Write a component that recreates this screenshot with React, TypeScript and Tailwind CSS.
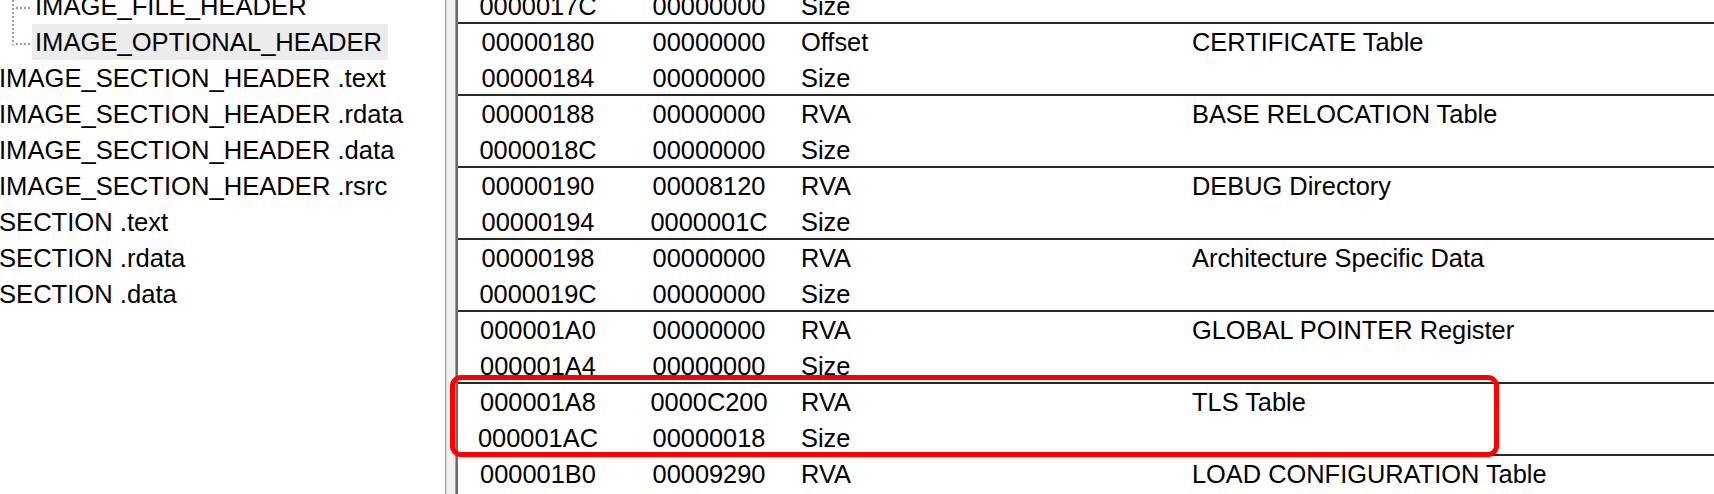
import React from "react";

type Row = [string, string, string, string];

const pairs: Row[][] = [
  [
    ["00000178", "00000000", "RVA", "EXCEPTION Table"],
    ["0000017C", "00000000", "Size", ""],
  ],
  [
    ["00000180", "00000000", "Offset", "CERTIFICATE Table"],
    ["00000184", "00000000", "Size", ""],
  ],
  [
    ["00000188", "00000000", "RVA", "BASE RELOCATION Table"],
    ["0000018C", "00000000", "Size", ""],
  ],
  [
    ["00000190", "00008120", "RVA", "DEBUG Directory"],
    ["00000194", "0000001C", "Size", ""],
  ],
  [
    ["00000198", "00000000", "RVA", "Architecture Specific Data"],
    ["0000019C", "00000000", "Size", ""],
  ],
  [
    ["000001A0", "00000000", "RVA", "GLOBAL POINTER Register"],
    ["000001A4", "00000000", "Size", ""],
  ],
  [
    ["000001A8", "0000C200", "RVA", "TLS Table"],
    ["000001AC", "00000018", "Size", ""],
  ],
  [
    ["000001B0", "00009290", "RVA", "LOAD CONFIGURATION Table"],
    ["000001B4", "00000040", "Size", ""],
  ],
];

function Connector({ last }: { last: boolean }) {
  return (
    <svg width="32" height="36" className="flex-none">
      <line
        x1="13"
        y1="0"
        x2="13"
        y2={last ? 21 : 36}
        stroke="#9c9c9c"
        strokeWidth="2"
        strokeDasharray="2 2"
      />
      <line
        x1="16"
        y1="20"
        x2="31"
        y2="20"
        stroke="#9c9c9c"
        strokeWidth="2"
        strokeDasharray="2 2"
      />
    </svg>
  );
}

function ListRow({ r, bottomLine }: { r: Row; bottomLine: boolean }) {
  return (
    <div
      className={
        "flex h-[36px] leading-[36px] whitespace-nowrap " +
        (bottomLine ? "shadow-[inset_0_-2px_0_#2a2a2a]" : "")
      }
    >
      <div className="w-[160px] flex-none text-center">{r[0]}</div>
      <div className="w-[182px] flex-none text-center">{r[1]}</div>
      <div className="w-[392px] flex-none pl-[1px]">{r[2]}</div>
      <div className="flex-1">{r[3]}</div>
    </div>
  );
}

export default function App() {
  const topItems = [
    "IMAGE_SECTION_HEADER .text",
    "IMAGE_SECTION_HEADER .rdata",
    "IMAGE_SECTION_HEADER .data",
    "IMAGE_SECTION_HEADER .rsrc",
    "SECTION .text",
    "SECTION .rdata",
    "SECTION .data",
  ];
  return (
    <div className="relative flex w-[1714px] h-[494px] overflow-hidden bg-white text-black font-['Liberation_Sans',Arial,sans-serif]">
      {/* Tree panel */}
      <div className="w-[445px] flex-none overflow-hidden text-[25.6px] leading-[36px]">
        <div className="-mt-[12px]">
          <div className="flex h-[36px] items-center whitespace-nowrap">
            <Connector last={false} />
            <span className="pl-[3px]">IMAGE_FILE_HEADER</span>
          </div>
          <div className="flex h-[36px] items-center whitespace-nowrap">
            <Connector last={true} />
            <span className="w-[356px] h-[36px] bg-[#ececec] pl-[3px]">IMAGE_OPTIONAL_HEADER</span>
          </div>
          {topItems.map((t) => (
            <div key={t} className="h-[36px] whitespace-nowrap -ml-[1px]">
              {t}
            </div>
          ))}
        </div>
      </div>

      {/* Splitter */}
      <div className="flex flex-none h-full">
        <div className="w-[1px] bg-[#a0a0a0]" />
        <div className="w-[1px] bg-[#dcdcdc]" />
        <div className="w-[8px] bg-[#f0f0f0]" />
        <div className="w-[1px] bg-[#a0a0a0]" />
        <div className="w-[2px] bg-[#6a6a6a]" />
      </div>

      {/* List panel */}
      <div className="flex-1 overflow-hidden text-[25.4px]">
        <div className="-mt-[48px]">
          {pairs.map((p, i) => (
            <div key={i}>
              <ListRow r={p[0]} bottomLine={false} />
              <ListRow r={p[1]} bottomLine={true} />
            </div>
          ))}
        </div>
      </div>

      {/* Red highlight box */}
      <div className="absolute left-[450px] top-[375px] w-[1049px] h-[82px] border-[5px] border-[#ff0000] rounded-[11px] pointer-events-none" />
    </div>
  );
}
